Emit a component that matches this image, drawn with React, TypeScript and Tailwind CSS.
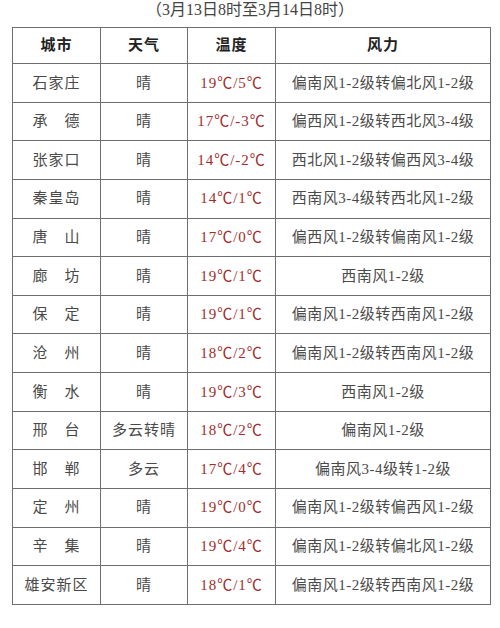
import React from "react";

const rows: [string, string, string, string][] = [
  ["石家庄", "晴", "19℃/5℃", "偏南风1-2级转偏北风1-2级"],
  ["承　德", "晴", "17℃/-3℃", "偏西风1-2级转西北风3-4级"],
  ["张家口", "晴", "14℃/-2℃", "西北风1-2级转偏西风3-4级"],
  ["秦皇岛", "晴", "14℃/1℃", "西南风3-4级转西北风1-2级"],
  ["唐　山", "晴", "17℃/0℃", "偏西风1-2级转偏南风1-2级"],
  ["廊　坊", "晴", "19℃/1℃", "西南风1-2级"],
  ["保　定", "晴", "19℃/1℃", "偏南风1-2级转西南风1-2级"],
  ["沧　州", "晴", "18℃/2℃", "偏南风1-2级转西南风1-2级"],
  ["衡　水", "晴", "19℃/3℃", "西南风1-2级"],
  ["邢　台", "多云转晴", "18℃/2℃", "偏南风1-2级"],
  ["邯　郸", "多云", "17℃/4℃", "偏南风3-4级转1-2级"],
  ["定　州", "晴", "19℃/0℃", "偏南风1-2级转偏西风1-2级"],
  ["辛　集", "晴", "19℃/4℃", "偏南风1-2级转偏北风1-2级"],
  ["雄安新区", "晴", "18℃/1℃", "偏南风1-2级转西南风1-2级"],
];

const font = { fontFamily: '"Liberation Serif", "Noto Sans CJK SC", serif' };

export default function App() {
  return (
    <div className="w-[500px] h-[628px] bg-white overflow-hidden" style={font}>
      <div className="h-[27px] pt-[1px] text-center text-[16px] leading-[17px] text-[#444]">
        （3月13日8时至3月14日8时）
      </div>
      <div className="ml-[12px] w-[479px] border-l border-t border-[#6e6e6e]">
        <div className="grid grid-cols-[88px_87px_88px_215px] h-[36px]">
          {["城市", "天气", "温度", "风力"].map((h) => (
            <div
              key={h}
              className="flex items-center justify-center border-r border-b border-[#6e6e6e] text-[15px] font-semibold text-[#222] tracking-[1px]"
            >
              {h}
            </div>
          ))}
        </div>
        {rows.map((r, i) => (
          <div key={i} className="grid grid-cols-[88px_87px_88px_215px] h-[38.64px]">
            <div className="flex items-center justify-center border-r border-b border-[#6e6e6e] text-[15px] text-[#4a4a4a] tracking-[1px] whitespace-nowrap">
              {r[0]}
            </div>
            <div className="flex items-center justify-center border-r border-b border-[#6e6e6e] text-[15px] text-[#4a4a4a] tracking-[1px] whitespace-nowrap">
              {r[1]}
            </div>
            <div className="flex items-center justify-center border-r border-b border-[#6e6e6e] text-[15px] text-[#a02c2c] tracking-[1px] whitespace-nowrap">
              {r[2]}
            </div>
            <div className="flex items-center justify-center border-r border-b border-[#6e6e6e] text-[15px] text-[#4a4a4a] tracking-[0.5px] whitespace-nowrap">
              {r[3]}
            </div>
          </div>
        ))}
      </div>
    </div>
  );
}
